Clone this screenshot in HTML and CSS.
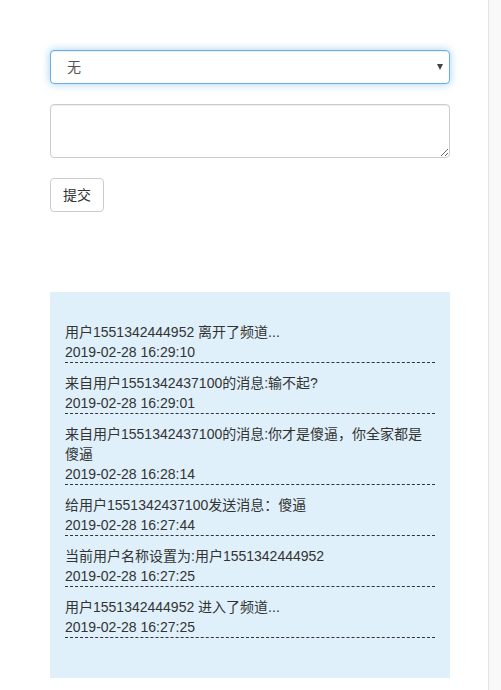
FILE: index.html
```html
<!DOCTYPE html>
<html>
  <head>
    <meta charset="utf-8">
    <title>聊天频道</title>
    <link rel="stylesheet" href="styles.css">
  </head>
  <body class="page">
    <div class="main">
      <div class="select-wrap">
        <select class="form-control is-focus">
          <option>无</option>
        </select>
      </div>
      <textarea class="form-control msg-input" rows="2"></textarea>
      <button class="btn">提交</button>

      <div class="log">
        <div class="log-item">
          <div>用户1551342444952 离开了频道...</div>
          <div>2019-02-28 16:29:10</div>
        </div>
        <div class="log-item">
          <div>来自用户1551342437100的消息:输不起?</div>
          <div>2019-02-28 16:29:01</div>
        </div>
        <div class="log-item">
          <div>来自用户1551342437100的消息:你才是傻逼，你全家都是傻逼</div>
          <div>2019-02-28 16:28:14</div>
        </div>
        <div class="log-item">
          <div>给用户1551342437100发送消息：傻逼</div>
          <div>2019-02-28 16:27:44</div>
        </div>
        <div class="log-item">
          <div>当前用户名称设置为:用户1551342444952</div>
          <div>2019-02-28 16:27:25</div>
        </div>
        <div class="log-item">
          <div>用户1551342444952 进入了频道...</div>
          <div>2019-02-28 16:27:25</div>
        </div>
      </div>
    </div>
    <div class="side"></div>
  </body>
</html>
```

FILE: styles.css
```css
html, body {
  margin: 0;
  height: 100%;
}
.page {
  display: flex;
  font-family: "Liberation Sans", "Noto Sans CJK SC", sans-serif;
  font-size: 14px;
  line-height: 20px;
  color: #333333;
  background: #ffffff;
}
.main {
  width: 400px;
  padding: 50px 38px 0 50px;
  display: flex;
  flex-direction: column;
  align-items: flex-start;
}
.side {
  flex: 1;
  border-left: 1px solid #e3e3e3;
  background: #f9f9f9;
}
.form-control {
  display: block;
  box-sizing: border-box;
  width: 400px;
  padding: 6px 12px;
  font-family: inherit;
  font-size: 14px;
  line-height: 20px;
  color: #555555;
  background: #ffffff;
  border: 1px solid #cccccc;
  border-radius: 4px;
  box-shadow: inset 0 1px 1px rgba(0, 0, 0, .075);
  margin: 0;
}
.select-wrap {
  position: relative;
  width: 400px;
}
.select-wrap::after {
  content: "";
  position: absolute;
  right: 7px;
  top: 14px;
  border-left: 3.5px solid transparent;
  border-right: 3.5px solid transparent;
  border-top: 6px solid #444444;
}
select.form-control {
  height: 34px;
  padding-left: 16px;
  appearance: none;
  -webkit-appearance: none;
}
.is-focus {
  border-color: #66afe9;
  outline: 0;
  box-shadow: inset 0 1px 1px rgba(0, 0, 0, .075), 0 0 8px rgba(102, 175, 233, .6);
}
.msg-input {
  height: 54px;
  margin-top: 20px;
  resize: vertical;
}
.btn {
  margin-top: 20px;
  height: 34px;
  padding: 6px 12px;
  font-family: inherit;
  font-size: 14px;
  line-height: 20px;
  color: #333333;
  background: #ffffff;
  border: 1px solid #cccccc;
  border-radius: 4px;
}
.log {
  box-sizing: border-box;
  width: 400px;
  margin-top: 80px;
  padding: 20px 15px 30px;
  background: #dff0fa;
}
.log-item {
  margin: 10px 0;
  border-bottom: 1px dashed #333333;
}
```
